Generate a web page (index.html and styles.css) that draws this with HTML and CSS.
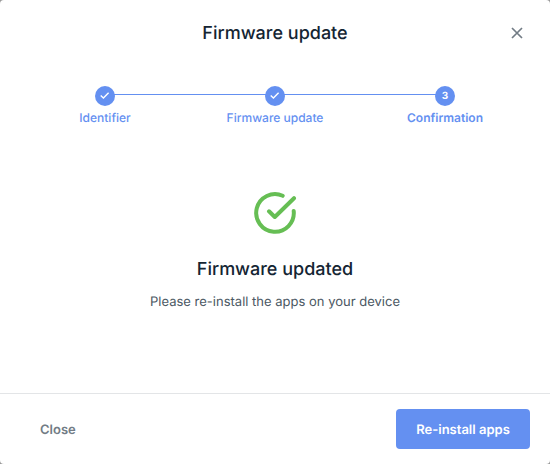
FILE: index.html
```html
<!DOCTYPE html>
<html lang="en">
<head>
<meta charset="utf-8">
<title>Firmware update</title>
<link rel="stylesheet" href="styles.css">
</head>
<body>
<main class="modal">
  <header class="header">
    <h1 class="title">Firmware update</h1>
    <button class="dismiss" aria-label="Close"><svg width="16" height="16" viewBox="0 0 16 16"><path d="M3 3l10 10M13 3L3 13"/></svg></button>
  </header>
  <ol class="steps">
    <li class="step"><span class="dot"><svg width="16" height="16" viewBox="0 0 16 16"><path d="M3.7 7.6l2.7 2.4 5.2-5.3"/></svg></span><span class="label">Identifier</span></li>
    <li class="step"><span class="dot"><svg width="16" height="16" viewBox="0 0 16 16"><path d="M3.7 7.6l2.7 2.4 5.2-5.3"/></svg></span><span class="label">Firmware update</span></li>
    <li class="step current"><span class="dot">3</span><span class="label">Confirmation</span></li>
  </ol>
  <section class="content">
    <svg class="success" width="44" height="44" viewBox="0 0 44 44"><path d="M29.7 3.8A18.8 18.8 0 1 0 40.7 19M16 19.3l5.8 5.7L41 6.2"/></svg>
    <h2 class="result">Firmware updated</h2>
    <p class="message">Please re-install the apps on your device</p>
  </section>
  <footer class="footer">
    <button class="close">Close</button>
    <button class="primary">Re-install apps</button>
  </footer>
</main>
</body>
</html>
```
FILE: styles.css
```css
* { box-sizing: border-box; }
body { margin: 0; background: #999; font-family: Inter, sans-serif; color: #142533; text-rendering: geometricPrecision; }
button { border: 0; background: none; padding: 0; font: inherit; text-rendering: inherit; }
h1, h2, p, ol { margin: 0; padding: 0; }
.modal { height: 464px; display: flex; flex-direction: column; background: #fff; border-radius: 4px; overflow: hidden; }
.header { height: 66px; display: grid; grid-template-columns: 1fr auto 1fr; align-items: center; padding: 0 25px; }
.title { grid-column: 2; font-size: 18px; font-weight: 500; line-height: 24px; padding-top: 2px; }
.dismiss { grid-column: 3; justify-self: end; height: 16px; }
.dismiss svg { display: block; fill: none; stroke: #727c85; stroke-width: 1.7; }
.steps { display: grid; grid-template-columns: repeat(3, 170px); justify-content: center; padding-top: 20px; list-style: none; background: linear-gradient(#6490f1, #6490f1) 105px 28px / 340px 1px no-repeat; }
.step { display: flex; flex-direction: column; align-items: center; color: #6490f1; font-size: 12px; font-weight: 500; }
.dot { width: 20px; height: 20px; border-radius: 50%; background: #6490f1; color: #fff; display: flex; align-items: center; justify-content: center; font-size: 10px; font-weight: 700; }
.dot svg { fill: none; stroke: #fff; stroke-width: 1.4; }
.label { line-height: 16px; margin-top: 4px; }
.current { font-weight: 600; }
.content { flex: 1; display: flex; flex-direction: column; align-items: center; padding-top: 66px; }
.success { fill: none; stroke: #66be54; stroke-width: 4; stroke-linecap: round; stroke-linejoin: round; }
.result { font-size: 18px; font-weight: 500; line-height: 24px; margin-top: 22px; }
.message { font-size: 13px; line-height: 20px; margin-top: 10px; color: #4b5863; }
.footer { height: 71px; border-top: 1px solid #e3e5e7; display: flex; align-items: center; justify-content: space-between; padding: 0 20px; font-size: 13px; font-weight: 600; }
.close { height: 40px; padding: 2px 20px 0; color: #727c85; }
.primary { height: 40px; width: 134px; padding-top: 2px; border-radius: 4px; background: #6490f1; color: #fff; }
```
